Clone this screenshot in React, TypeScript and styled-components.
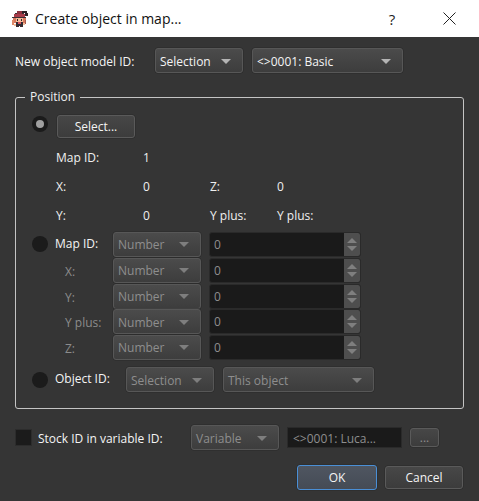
import styled, { createGlobalStyle } from "styled-components";

const Global = createGlobalStyle`
  html, body { margin: 0; padding: 0; background: #353535; }
  * { box-sizing: border-box; }
`;

const Window = styled.div`
  width: 479px;
  height: 501px;
  display: flex;
  flex-direction: column;
  overflow: hidden;
  background: #353535;
  color: #f0f0f0;
  font-family: "Open Sans", "Noto Sans", sans-serif;
  font-size: 12px;
`;

const TitleBar = styled.div`
  height: 37px;
  flex: none;
  background: #fff;
  display: flex;
  align-items: center;
  padding: 0 7px 0 10px;
  color: #111;
  font-size: 14px;
`;

const TitleText = styled.span`
  margin-left: 6px;
  flex: 1;
  padding-bottom: 1px;
`;

const TitleButton = styled.div<{ $gap?: number }>`
  width: 46px;
  height: 37px;
  margin-left: ${(p) => p.$gap ?? 0}px;
  display: flex;
  align-items: center;
  justify-content: center;
  font-size: 15px;
  color: #222;
`;

const Body = styled.div`
  flex: 1;
  display: flex;
  flex-direction: column;
  padding: 11px 15px 0 15px;
`;

const Row = styled.div<{ $height?: number; $top?: number }>`
  display: flex;
  align-items: center;
  height: ${(p) => p.$height ?? 25}px;
  margin-top: ${(p) => p.$top ?? 0}px;
  flex: none;
`;

const Label = styled.span<{ $width?: number; $dim?: boolean; $indent?: number; $raised?: boolean }>`
  display: block;
  flex: none;
  white-space: nowrap;
  width: ${(p) => (p.$width ? `${p.$width}px` : "auto")};
  color: ${(p) => (p.$dim ? "#8c8c8c" : "#f4f4f4")};
  padding: ${(p) => (p.$raised ? "0 0 2px" : "2px 0 0")} ${(p) => p.$indent ?? 0}px;
  padding-right: 0;
`;

const ComboBox = styled.div<{ $width: number; $disabled?: boolean; $right?: number }>`
  width: ${(p) => p.$width}px;
  height: 25px;
  flex: none;
  margin-right: ${(p) => p.$right ?? 0}px;
  display: flex;
  align-items: center;
  justify-content: space-between;
  padding: 1px 11px 0 4px;
  border: 1px solid #575757;
  box-shadow: 0 0 0 0.5px #2a2a2a;
  border-radius: 3px;
  background: linear-gradient(#4b4b4b, #3d3d3d);
  color: ${(p) => (p.$disabled ? "#8e8e8e" : "#f4f4f4")};
`;

const Arrow = styled.span<{ $disabled?: boolean }>`
  width: 0;
  height: 0;
  border-left: 5px solid transparent;
  border-right: 5px solid transparent;
  border-top: 5px solid ${(p) => (p.$disabled ? "#7e7e7e" : "#b4b4b4")};
`;

const Group = styled.fieldset`
  margin: 17px 0 0 0;
  padding: 11px 0 0 16px;
  width: 449px;
  height: 319px;
  flex: none;
  border: 1px solid #c4c4c4;
  border-radius: 3px;
`;

const Legend = styled.legend`
  margin-left: -7px;
  padding: 0 5px;
  font-size: 12px;
  line-height: 14px;
`;

const Radio = styled.span<{ $checked?: boolean }>`
  width: 16px;
  height: 16px;
  flex: none;
  margin-right: ${(p) => (p.$checked ? 9 : 0)}px;
  margin-bottom: ${(p) => (p.$checked ? 6 : 0)}px;
  border-radius: 50%;
  background: #1b1b1b;
  display: flex;
  align-items: center;
  justify-content: center;
  &::after {
    content: "";
    display: ${(p) => (p.$checked ? "block" : "none")};
    width: 8px;
    height: 8px;
    border-radius: 50%;
    background: #a0a0a0;
  }
`;

const Button = styled.div<{ $width: number; $height: number; $primary?: boolean; $disabled?: boolean }>`
  width: ${(p) => p.$width}px;
  height: ${(p) => p.$height}px;
  flex: none;
  display: flex;
  align-items: center;
  justify-content: center;
  border: 1px solid ${(p) => (p.$primary ? "#4a8fd6" : "#5a5a5a")};
  border-radius: 3px;
  background: ${(p) =>
    p.$primary ? "linear-gradient(#4f5661, #454b55)" : "linear-gradient(#474747, #3c3c3c)"};
  color: ${(p) => (p.$disabled ? "#8e8e8e" : "#f4f4f4")};
  box-shadow: 0 0 0 0.5px #2a2a2a;
`;

const InfoGrid = styled.div`
  display: grid;
  grid-template-columns: 87px 67px 67px auto;
  grid-auto-rows: 29px;
  align-items: center;
  justify-content: start;
  padding-left: 24px;
  margin-top: 5px;
  margin-bottom: 1px;
`;

const InfoCell = styled.span`
  white-space: nowrap;
`;

const Spin = styled.div`
  width: 152px;
  height: 25px;
  flex: none;
  margin-left: 8px;
  display: flex;
  background: #1a1a1a;
  border: 1px solid #2a2a2a;
  border-radius: 3px;
  color: #8e8e8e;
`;

const SpinValue = styled.span`
  flex: 1;
  padding-left: 4px;
  line-height: 24px;
`;

const SpinButtons = styled.div`
  width: 16px;
  display: flex;
  flex-direction: column;
  align-items: center;
  justify-content: center;
  gap: 3px;
  background: #4e4e4e;
  border-radius: 0 2px 2px 0;
`;

const SpinTri = styled.span<{ $up?: boolean }>`
  width: 0;
  height: 0;
  border-left: 5px solid transparent;
  border-right: 5px solid transparent;
  ${(p) => (p.$up ? "border-bottom" : "border-top")}: 5px solid #7f7f7f;
`;

const Check = styled.span`
  width: 17px;
  height: 17px;
  flex: none;
  background: #1b1b1b;
  border: 1px solid #2c2c2c;
`;

const ReadOnly = styled.div`
  width: 115px;
  height: 21px;
  flex: none;
  margin: 0 8px;
  padding-left: 5px;
  background: #1a1a1a;
  border: 1px solid #2a2a2a;
  color: #8e8e8e;
  line-height: 21px;
  white-space: nowrap;
`;

const Footer = styled.div`
  display: flex;
  justify-content: flex-end;
  align-items: center;
  gap: 8px;
  margin-top: 15px;
  padding-right: 1px;
`;

const PixelIcon = () => (
  <svg width="19" height="18" viewBox="0 0 19 18" shapeRendering="crispEdges">
    <rect x="5" y="3" width="9" height="2" fill="#3a3034" />
    <rect x="12" y="1" width="5" height="2" fill="#2c2226" />
    <rect x="15" y="3" width="3" height="3" fill="#2c2226" />
    <rect x="4" y="4" width="11" height="3" fill="#a83c4a" />
    <rect x="7" y="1" width="5" height="3" fill="#8c3440" />
    <rect x="2" y="7" width="14" height="1" fill="#3a3034" />
    <rect x="6" y="8" width="7" height="4" fill="#f5bd9a" />
    <rect x="7" y="9" width="1" height="2" fill="#2c2226" />
    <rect x="11" y="9" width="1" height="2" fill="#2c2226" />
    <rect x="3" y="8" width="3" height="5" fill="#d9785e" />
    <rect x="2" y="10" width="2" height="5" fill="#e08a68" />
    <rect x="13" y="8" width="3" height="5" fill="#d9785e" />
    <rect x="15" y="10" width="1" height="4" fill="#a85a4a" />
    <rect x="6" y="12" width="7" height="4" fill="#2f2a33" />
    <rect x="8" y="12" width="3" height="2" fill="#d9505c" />
    <rect x="4" y="14" width="2" height="2" fill="#f5bd9a" />
    <rect x="13" y="13" width="2" height="2" fill="#f5bd9a" />
    <rect x="6" y="16" width="3" height="1" fill="#3a2a30" />
    <rect x="10" y="16" width="3" height="1" fill="#3a2a30" />
  </svg>
);

const CloseIcon = () => (
  <svg width="13" height="13" viewBox="0 0 13 13">
    <path d="M0.5 0.5 L12.5 12.5 M12.5 0.5 L0.5 12.5" stroke="#222" strokeWidth="1" fill="none" />
  </svg>
);

const Combo = ({
  width,
  text,
  disabled,
  right,
}: {
  width: number;
  text: string;
  disabled?: boolean;
  right?: number;
}) => (
  <ComboBox $width={width} $disabled={disabled} $right={right}>
    <span>{text}</span>
    <Arrow $disabled={disabled} />
  </ComboBox>
);

const SpinBox = () => (
  <Spin>
    <SpinValue>0</SpinValue>
    <SpinButtons>
      <SpinTri $up />
      <SpinTri />
    </SpinButtons>
  </Spin>
);

const numberRows = [
  { label: "X:", height: 26 },
  { label: "Y:", height: 26 },
  { label: "Y plus:", height: 25 },
  { label: "Z:", height: 26 },
];

export default function App() {
  return (
    <Window>
      <Global />
      <TitleBar>
        <PixelIcon />
        <TitleText>Create object in map...</TitleText>
        <TitleButton>?</TitleButton>
        <TitleButton $gap={11}>
          <CloseIcon />
        </TitleButton>
      </TitleBar>
      <Body>
        <Row>
          <Label $width={140}>New object model ID:</Label>
          <Combo width={88} text="Selection" right={9} />
          <Combo width={151} text="<>0001: Basic" />
        </Row>
        <Group>
          <Legend>Position</Legend>
          <Row $height={23}>
            <Radio $checked />
            <Button $width={78} $height={23}>
              Select...
            </Button>
          </Row>
          <InfoGrid>
            <InfoCell>Map ID:</InfoCell>
            <InfoCell>1</InfoCell>
            <InfoCell />
            <InfoCell />
            <InfoCell>X:</InfoCell>
            <InfoCell>0</InfoCell>
            <InfoCell>Z:</InfoCell>
            <InfoCell>0</InfoCell>
            <InfoCell>Y:</InfoCell>
            <InfoCell>0</InfoCell>
            <InfoCell>Y plus:</InfoCell>
            <InfoCell>Y plus:</InfoCell>
          </InfoGrid>
          <Row $height={26}>
            <Radio />
            <Label $width={65} $indent={7} $raised>
              Map ID:
            </Label>
            <Combo width={88} text="Number" disabled />
            <SpinBox />
          </Row>
          {numberRows.map((r) => (
            <Row key={r.label} $height={r.height}>
              <Label $width={81} $dim $indent={33}>
                {r.label}
              </Label>
              <Combo width={88} text="Number" disabled />
              <SpinBox />
            </Row>
          ))}
          <Row $top={7}>
            <Radio />
            <Label $width={78} $indent={7} $raised>
              Object ID:
            </Label>
            <Combo width={88} text="Selection" disabled right={9} />
            <Combo width={151} text="This object" disabled />
          </Row>
        </Group>
        <Row $top={16}>
          <Check />
          <Label $width={159} $indent={6}>
            Stock ID in variable ID:
          </Label>
          <Combo width={88} text="Variable" disabled />
          <ReadOnly>&lt;&gt;0001: Luca...</ReadOnly>
          <Button $width={29} $height={19} $disabled>
            ...
          </Button>
        </Row>
        <Footer>
          <Button $width={80} $height={25} $primary>
            OK
          </Button>
          <Button $width={78} $height={23}>
            Cancel
          </Button>
        </Footer>
      </Body>
    </Window>
  );
}
